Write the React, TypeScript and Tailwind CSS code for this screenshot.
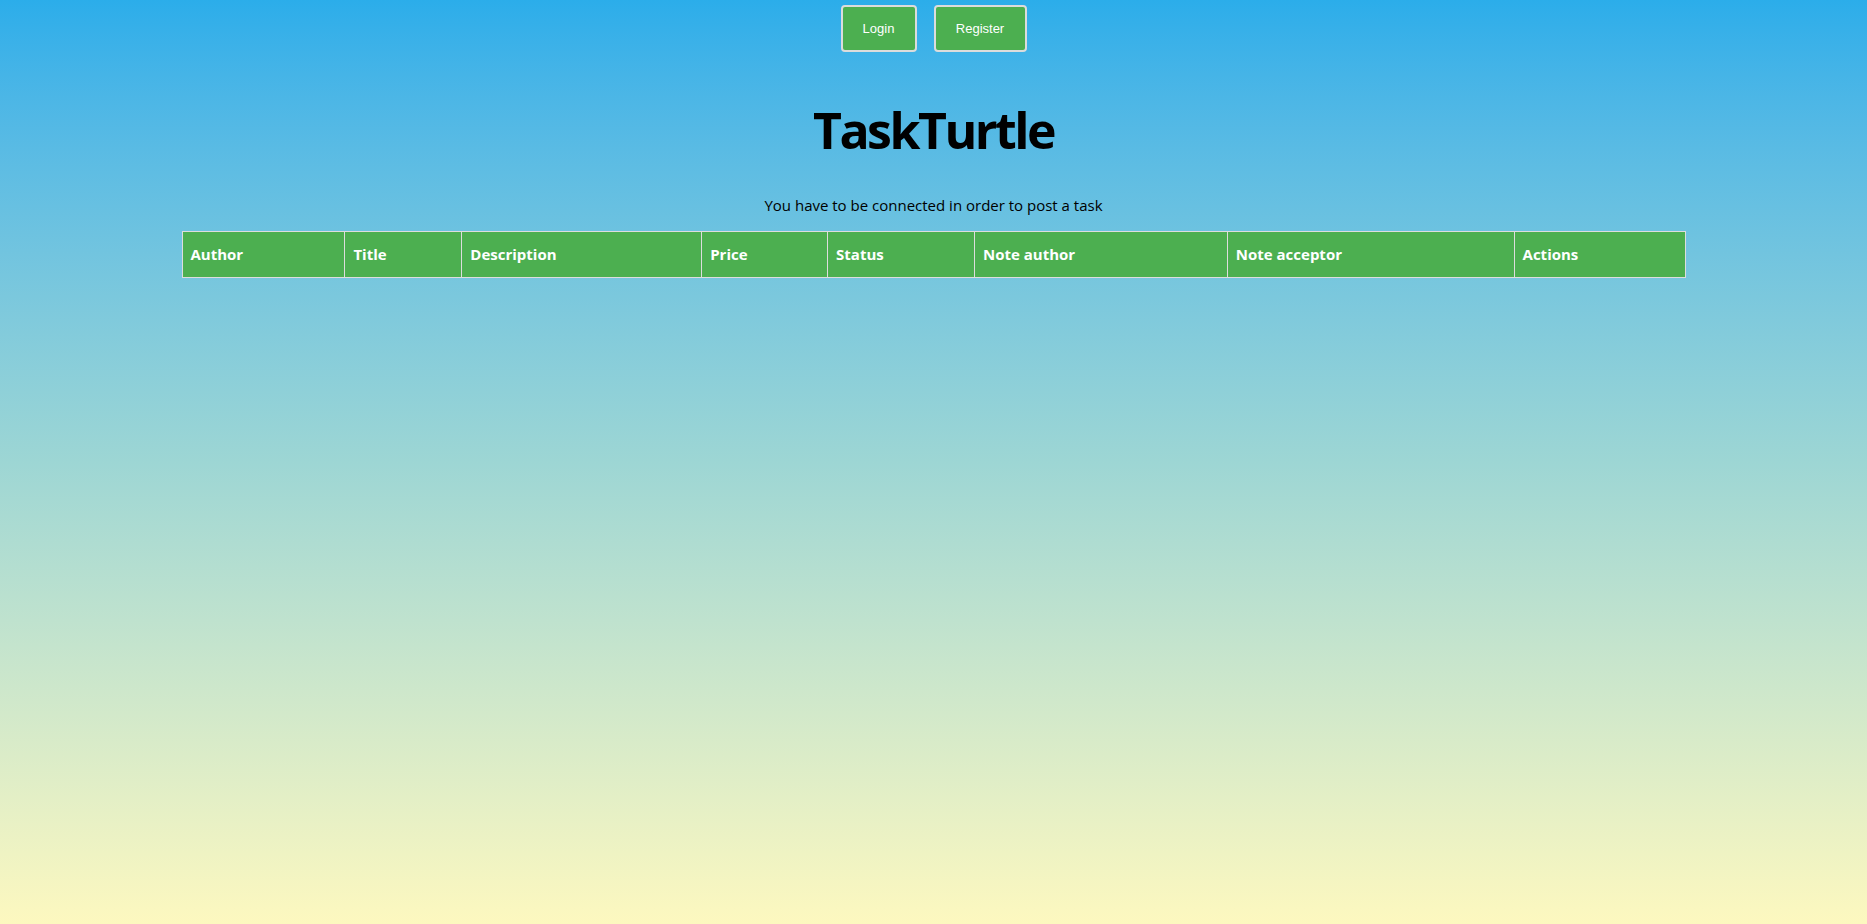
const COLUMNS = [
  { label: 'Author', width: 'w-[163px]' },
  { label: 'Title', width: 'w-[117px]' },
  { label: 'Description', width: 'w-[240px]' },
  { label: 'Price', width: 'w-[126px]' },
  { label: 'Status', width: 'w-[147px]' },
  { label: 'Note author', width: 'w-[253px]' },
  { label: 'Note acceptor', width: 'w-[287px]' },
  { label: 'Actions', width: 'w-[171px]' },
];

function NavButton({ label, width }: { label: string; width: string }) {
  return (
    <button
      className={`${width} h-[47px] rounded-[4px] border-2 border-[#dcdcdc] bg-[#4caf50] text-[13px] text-white font-['Liberation_Sans',Arial,sans-serif]`}
    >
      {label}
    </button>
  );
}

export default function App() {
  return (
    <div className="min-h-screen bg-gradient-to-b from-[#2badea] via-[#9dd6d4] to-[#fdf8bf] font-['Open_Sans','Noto_Sans',sans-serif] text-black">
      <div className="flex justify-center gap-[17px] pt-[5px]">
        <NavButton label="Login" width="w-[76px]" />
        <NavButton label="Register" width="w-[93px]" />
      </div>

      <h1 className="mt-[38px] text-center text-[50px] font-bold leading-[80px] tracking-[-2.5px]">TaskTurtle</h1>

      <p className="mt-[24px] text-center text-[15px] leading-[22px]">
        You have to be connected in order to post a task
      </p>

      <table className="mx-auto mt-[15px] w-[1504px] border-collapse">
        <thead>
          <tr className="bg-[#4caf50]">
            {COLUMNS.map(col => (
              <th
                key={col.label}
                className={`${col.width} h-[46px] border border-[#dddddd] px-[8px] text-left text-[15px] font-bold text-white`}
              >
                {col.label}
              </th>
            ))}
          </tr>
        </thead>
        <tbody></tbody>
      </table>
    </div>
  );
}
